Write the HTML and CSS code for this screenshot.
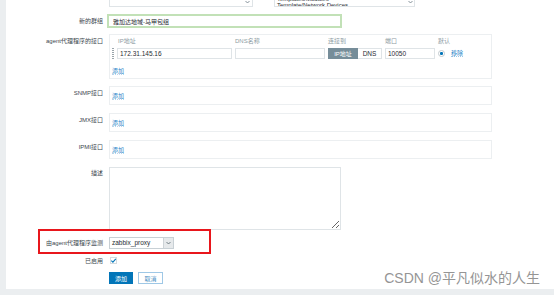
FILE: index.html
```html
<!DOCTYPE html>
<html>
<head>
<meta charset="utf-8">
<link rel="stylesheet" href="styles.css">
</head>
<body>
<div class="screen">
  <div class="form">

    <div class="row row-top">
      <div class="label"></div>
      <div class="top-fields">
        <div class="hostbox">
          <svg class="caret" width="5" height="4" viewBox="0 0 5 4"><polyline points="0.5,1 2.5,3 4.5,1" fill="none" stroke="#6b7a83" stroke-width="0.8"/></svg>
        </div>
        <div class="tplbox">
          <div class="tpl-lines">Templates/Modules<br>Template/Network Devices</div>
          <svg class="caret" width="5" height="4" viewBox="0 0 5 4"><polyline points="0.5,1 2.5,3 4.5,1" fill="none" stroke="#6b7a83" stroke-width="0.8"/></svg>
        </div>
      </div>
    </div>

    <div class="row row-group">
      <div class="label">新的群组</div>
      <input class="group-input" type="text" value="雅加达地域-马甲包组">
    </div>

    <div class="row row-iface">
      <div class="label">agent代理程序的接口</div>
      <div class="iface-box">
        <div class="iface-grid">
          <span></span>
          <span class="th th-ip">IP地址</span>
          <span class="th">DNS名称</span>
          <span class="th">连接到</span>
          <span class="th">端口</span>
          <span class="th">默认</span>

          <span class="handle"></span>
          <input class="inp" type="text" value="172.31.145.16">
          <input class="inp" type="text" value="">
          <div class="toggle"><span class="on">IP地址</span><span class="off">DNS</span></div>
          <input class="inp" type="text" value="10050">
          <div class="def"><span class="radio"></span><a class="link remove">移除</a></div>
        </div>
        <a class="link add">添加</a>
      </div>
    </div>

    <div class="row row-simple">
      <div class="label">SNMP接口</div>
      <div class="simple-box"><a class="link">添加</a></div>
    </div>

    <div class="row row-simple">
      <div class="label">JMX接口</div>
      <div class="simple-box"><a class="link">添加</a></div>
    </div>

    <div class="row row-simple">
      <div class="label">IPMI接口</div>
      <div class="simple-box"><a class="link">添加</a></div>
    </div>

    <div class="row row-desc">
      <div class="label">描述</div>
      <textarea class="desc"></textarea>
    </div>

    <div class="row row-proxy">
      <div class="label">由agent代理程序监测</div>
      <div class="select">
        <span class="select-text">zabbix_proxy</span>
        <span class="select-arrow">
          <svg width="5" height="4" viewBox="0 0 5 4"><polyline points="0.5,1 2.5,3 4.5,1" fill="none" stroke="#55646d" stroke-width="0.8"/></svg>
        </span>
      </div>
    </div>

    <div class="row row-enabled">
      <div class="label">已启用</div>
      <span class="checkbox">
        <svg width="7" height="7" viewBox="0 0 7 7"><polyline points="1.3,3.6 2.9,5.1 5.8,1.8" fill="none" stroke="#0275b8" stroke-width="1.1"/></svg>
      </span>
    </div>

    <div class="row row-buttons">
      <div class="label"></div>
      <div class="buttons">
        <button class="btn btn-primary">添加</button>
        <button class="btn btn-alt">取消</button>
      </div>
    </div>

  </div>

  <div class="annotation"></div>
  <div class="watermark">CSDN @平凡似水的人生</div>
</div>
</body>
</html>
```

FILE: styles.css
```css
body {
  margin: 0;
  font-family: "Liberation Sans", "Noto Sans CJK SC", sans-serif;
  color: #1f2c33;
  background: #fff;
}

.screen {
  position: relative;
  width: 554px;
  height: 295px;
  background: #ebeef0;
  overflow: hidden;
}

/* white form panel, gray strip on the left and at the bottom */
.form {
  margin-left: 6px;
  height: 289px;
  background: #fff;
}

.row {
  display: flex;
  column-gap: 6px;
}

.label {
  width: 97px;
  flex: none;
  text-align: right;
  font-size: 6px;
  line-height: 7px;
  padding-top: 4px;
  color: #3b474e;
  white-space: nowrap;
}

/* cut off selects at the top */
.row-top {
  height: 7px;
  margin-bottom: 7px;
}

.top-fields {
  display: flex;
  column-gap: 21px;
}

.hostbox {
  width: 144px;
  height: 7px;
  box-sizing: border-box;
  border: 1px solid #dfe4e7;
  border-top: none;
  display: flex;
  justify-content: flex-end;
  padding-right: 2px;
}

.tplbox {
  width: 141px;
  height: 7px;
  box-sizing: border-box;
  border: 1px solid #dfe4e7;
  border-top: none;
  display: flex;
  justify-content: space-between;
  overflow: hidden;
  padding: 0 1px 0 2px;
}

.tpl-lines {
  font-size: 6px;
  line-height: 5.5px;
  margin-top: -3px;
  white-space: nowrap;
}

.caret {
  display: block;
  flex: none;
}

/* group */
.row-group {
  margin-bottom: 6px;
}

.group-input {
  margin-left: -2px;
  width: 235px;
  height: 14px;
  box-sizing: border-box;
  border: 2px solid #c2e1b7;
  padding: 0 4px;
  font-family: "Liberation Sans", "Noto Sans CJK SC", sans-serif;
  font-size: 6px;
  color: #1f2c33;
  outline: none;
}

/* agent interfaces */
.row-iface {
  margin-bottom: 7px;
}

.iface-box {
  width: 383px;
  height: 45px;
  box-sizing: border-box;
  border: 1px solid #eceff1;
  padding: 3px 0 0 2px;
}

.iface-grid {
  display: grid;
  grid-template-columns: 2px 115px 90px 54px 50px auto;
  column-gap: 3px;
  row-gap: 3px;
  align-items: center;
}

.th {
  font-size: 6px;
  line-height: 7px;
  color: #8d9ba3;
  white-space: nowrap;
}

.th-ip {
  padding-left: 1px;
}

.handle {
  height: 11px;
  box-sizing: border-box;
  border-left: 1px dotted #9aa5ab;
  border-right: 1px dotted #9aa5ab;
}

.inp {
  width: 100%;
  height: 11px;
  box-sizing: border-box;
  border: 1px solid #dfe4e7;
  padding: 0 2px;
  font-family: "Liberation Sans", sans-serif;
  font-size: 6.5px;
  color: #1f2c33;
  outline: none;
}

.toggle {
  display: flex;
  height: 11px;
  font-size: 6px;
}

.toggle span {
  display: flex;
  align-items: center;
  justify-content: center;
  box-sizing: border-box;
}

.toggle .on {
  width: 30px;
  background: #768d99;
  color: #fff;
}

.toggle .off {
  width: 24px;
  border: 1px solid #dfe4e7;
  border-left: none;
  color: #1f2c33;
  font-size: 6.5px;
}

.def {
  display: flex;
  align-items: center;
  column-gap: 6px;
}

.radio {
  width: 7px;
  height: 7px;
  box-sizing: border-box;
  border-radius: 50%;
  border: 1px solid #c3cbd0;
  background: radial-gradient(circle, #0275b8 0 1.3px, #fff 1.7px);
}

.link {
  color: #2b87c9;
  font-size: 6px;
  line-height: 7px;
  cursor: pointer;
}

.remove {
  border-bottom: 1px dotted #9cc7e6;
  line-height: 6px;
}

.add {
  display: inline-block;
  margin-top: 6px;
  border-bottom: 1px dotted #b8d6ec;
  line-height: 6px;
}

/* snmp / jmx / ipmi */
.row-simple {
  margin-bottom: 8px;
}

.simple-box {
  width: 383px;
  height: 19px;
  box-sizing: border-box;
  border: 1px solid #eceff1;
  padding: 1px 0 0 2px;
  display: flex;
  align-items: center;
}

.simple-box .link {
  border-bottom: 1px dotted #b8d6ec;
  line-height: 6px;
}

/* description */
.row-desc {
  margin-bottom: 7px;
}

.row-desc .label {
  padding-top: 3px;
}

.desc {
  width: 232px;
  height: 63px;
  box-sizing: border-box;
  margin: 0;
  border: 1px solid #dfe4e7;
  outline: none;
}

/* monitored by proxy */
.row-proxy {
  margin-bottom: 8px;
}

.row-proxy .label {
  padding-top: 3px;
}

.select {
  width: 65px;
  height: 12px;
  box-sizing: border-box;
  border: 1px solid #c8d0d5;
  display: flex;
  justify-content: space-between;
}

.select-text {
  font-size: 6.5px;
  line-height: 10px;
  padding-left: 2px;
}

.select-arrow {
  width: 9px;
  background: #e6e9eb;
  border-left: 1px solid #cdd3d7;
  display: flex;
  align-items: center;
  justify-content: center;
}

/* enabled */
.row-enabled {
  margin-bottom: 7px;
}

.row-enabled .label {
  padding-top: 1px;
}

.checkbox {
  margin-left: 1px;
  width: 7px;
  height: 7px;
  box-sizing: border-box;
  border: 1px solid #d5dbdf;
  display: flex;
}

.checkbox svg {
  margin: -1px;
}

/* buttons */
.buttons {
  display: flex;
  column-gap: 5px;
}

.btn {
  height: 12px;
  padding: 0;
  font-family: "Liberation Sans", "Noto Sans CJK SC", sans-serif;
  font-size: 6px;
  cursor: pointer;
  box-sizing: border-box;
}

.btn-primary {
  width: 24px;
  border: 1px solid #0275b8;
  background: #0275b8;
  color: #fff;
}

.btn-alt {
  width: 25px;
  border: 1px solid #9fc8e6;
  background: #fff;
  color: #4a8fc4;
}

/* red highlight drawn over the screenshot */
.annotation {
  position: absolute;
  left: 38px;
  top: 229px;
  width: 173px;
  height: 25px;
  box-sizing: border-box;
  border: 2px solid #e8161c;
}

.watermark {
  position: absolute;
  right: 14px;
  top: 270px;
  font-size: 14px;
  line-height: 16px;
  color: #959595;
  white-space: nowrap;
}
```
